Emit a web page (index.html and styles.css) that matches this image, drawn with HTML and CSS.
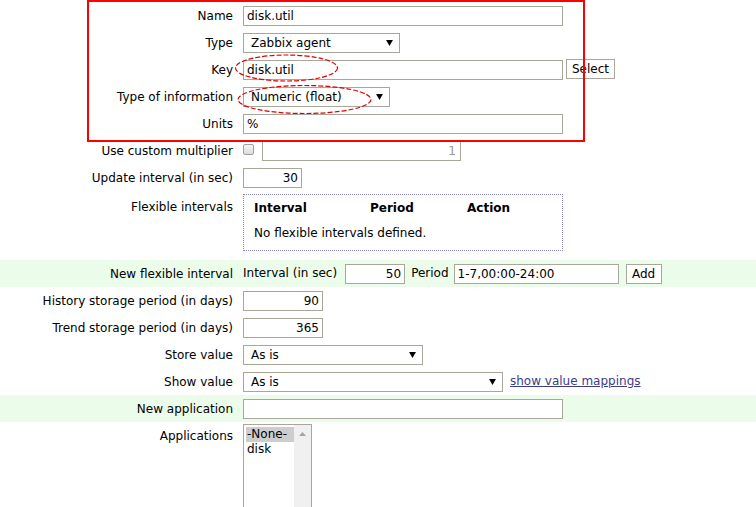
FILE: index.html
```html
<!DOCTYPE html>
<html>
<head>
<meta charset="utf-8">
<link rel="stylesheet" href="styles.css">
</head>
<body>
<div class="form">
  <div class="row">
    <div class="lbl">Name</div>
    <div class="fld"><input class="inp w320" type="text" value="disk.util"></div>
  </div>
  <div class="row">
    <div class="lbl">Type</div>
    <div class="fld"><div class="sel w157"><span>Zabbix agent</span><svg class="arr" width="8" height="7" viewBox="0 0 8 7"><path d="M0 0H8L4 7Z"/></svg></div></div>
  </div>
  <div class="row">
    <div class="lbl">Key</div>
    <div class="fld"><input class="inp w320" type="text" value="disk.util"><button class="btn btn-select">Select</button></div>
  </div>
  <div class="row">
    <div class="lbl">Type of information</div>
    <div class="fld"><div class="sel w147"><span>Numeric (float)</span><svg class="arr" width="8" height="7" viewBox="0 0 8 7"><path d="M0 0H8L4 7Z"/></svg></div></div>
  </div>
  <div class="row">
    <div class="lbl">Units</div>
    <div class="fld"><input class="inp w320" type="text" value="%"></div>
  </div>
  <div class="row">
    <div class="lbl">Use custom multiplier</div>
    <div class="fld"><span class="chk"></span><input class="inp w199 num dis" type="text" value="1"></div>
  </div>
  <div class="row">
    <div class="lbl">Update interval (in sec)</div>
    <div class="fld"><input class="inp w59 num" type="text" value="30"></div>
  </div>
  <div class="row row-flex">
    <div class="lbl lbl-top">Flexible intervals</div>
    <div class="fld">
      <div class="flexbox">
        <div class="fb-head"><span class="c1">Interval</span><span class="c2">Period</span><span class="c3">Action</span></div>
        <div class="fb-body">No flexible intervals defined.</div>
      </div>
    </div>
  </div>
  <div class="row green">
    <div class="lbl">New flexible interval</div>
    <div class="fld">
      <span>Interval (in sec)</span>
      <input class="inp w60 num ml8" type="text" value="50">
      <span class="ml6">Period</span>
      <input class="inp w165 ml5" type="text" value="1-7,00:00-24:00">
      <button class="btn btn-add">Add</button>
    </div>
  </div>
  <div class="row">
    <div class="lbl">History storage period (in days)</div>
    <div class="fld"><input class="inp w80 num" type="text" value="90"></div>
  </div>
  <div class="row">
    <div class="lbl">Trend storage period (in days)</div>
    <div class="fld"><input class="inp w80 num" type="text" value="365"></div>
  </div>
  <div class="row">
    <div class="lbl">Store value</div>
    <div class="fld"><div class="sel w180"><span>As is</span><svg class="arr" width="8" height="7" viewBox="0 0 8 7"><path d="M0 0H8L4 7Z"/></svg></div></div>
  </div>
  <div class="row">
    <div class="lbl">Show value</div>
    <div class="fld"><div class="sel w260"><span>As is</span><svg class="arr" width="8" height="7" viewBox="0 0 8 7"><path d="M0 0H8L4 7Z"/></svg></div><a class="link" href="#">show value mappings</a></div>
  </div>
  <div class="row green">
    <div class="lbl">New application</div>
    <div class="fld"><input class="inp w320" type="text" value=""></div>
  </div>
  <div class="row row-apps">
    <div class="lbl lbl-apps">Applications</div>
    <div class="fld">
      <div class="listbox">
        <div class="opts">
          <div class="opt selected">-None-</div>
          <div class="opt">disk</div>
        </div>
        <div class="scroll"><svg width="7" height="4" viewBox="0 0 7 4"><path d="M0 4L3.5 0L7 4Z"/></svg></div>
      </div>
    </div>
  </div>
</div>

<div class="annot-rect"></div>
<svg class="annot-ell" width="756" height="140" viewBox="0 0 756 140">
  <ellipse cx="286.5" cy="68" rx="51" ry="13" />
  <ellipse cx="304.5" cy="99.5" rx="66.5" ry="14" />
</svg>
</body>
</html>
```

FILE: styles.css
```css
html, body {
  margin: 0;
  padding: 0;
  background: #fff;
}
body {
  position: relative;
  width: 756px;
  height: 507px;
  overflow: hidden;
  font-family: "DejaVu Sans", Verdana, sans-serif;
  font-size: 12px;
  color: #000;
}
.form {
  padding-top: 2px;
}
.row {
  display: grid;
  grid-template-columns: 233px 1fr;
  column-gap: 10px;
  align-items: center;
  height: 27px;
  line-height: 15px;
}
.row.green {
  background: #ebfceb;
}
.lbl {
  text-align: right;
  white-space: nowrap;
  padding-top: 1px;
}
.fld {
  display: flex;
  align-items: center;
  white-space: nowrap;
}
.inp {
  box-sizing: border-box;
  height: 20px;
  border: 1px solid #a9a69a;
  background: #fff;
  font-family: inherit;
  font-size: 12px;
  color: #000;
  padding: 1px 3px 0 3px;
  margin: 0;
  outline: none;
}
.inp.num {
  text-align: right;
}
.inp.dis {
  color: #9a9a9a;
  padding-right: 4px;
}
.ml8 { margin-left: 8px; }
.ml6 { margin-left: 6px; }
.ml5 { margin-left: 5px; }
.w320 { width: 320px; }
.w199 { width: 199px; }
.w59 { width: 59px; }
.w60 { width: 60px; }
.w80 { width: 80px; }
.w165 { width: 165px; }
.w157 { width: 157px; }
.w147 { width: 147px; }
.w180 { width: 180px; }
.w260 { width: 260px; }

.sel {
  box-sizing: border-box;
  height: 20px;
  border: 1px solid #a9a69a;
  background: #fff;
  display: flex;
  align-items: center;
  justify-content: space-between;
  padding: 1px 6px 0 7px;
}
.arr {
  display: block;
  fill: #000;
  width: 7px;
  height: 6px;
  margin-top: -1px;
}
.btn {
  box-sizing: border-box;
  height: 20px;
  border: 1px solid #a9a69a;
  background: #fff;
  font-family: inherit;
  font-size: 12px;
  color: #000;
  padding: 0 4px;
  margin: 0;
}
.btn-select {
  margin-left: 3px;
  width: 49px;
  margin-top: -1px;
}
.btn-add {
  width: 36px;
  margin-left: 7px;
}
.chk {
  box-sizing: border-box;
  width: 11px;
  height: 11px;
  border: 1px solid #a0a0a0;
  border-radius: 2px;
  background: linear-gradient(#f4f4f4, #dcdcdc);
  margin-right: 8px;
  margin-top: -2px;
}
.link {
  margin-left: 7px;
  color: #3c3c8c;
  text-decoration: underline;
}

.row-flex {
  height: 69px;
  align-items: start;
}
.row-flex .fld {
  padding-top: 3px;
}
.lbl-top {
  padding-top: 9px;
}
.flexbox {
  box-sizing: border-box;
  width: 320px;
  height: 57px;
  border: 1px dotted #8a8ac4;
  padding: 6px 10px 0 10px;
}
.fb-head {
  display: flex;
  font-weight: bold;
}
.fb-head .c1 { width: 116px; }
.fb-head .c2 { width: 97px; }
.fb-body {
  margin-top: 10px;
}

.row-apps {
  height: 85px;
  align-items: start;
}
.lbl-apps {
  padding-top: 7px;
}
.row-apps .fld {
  padding-top: 2px;
  align-items: start;
}
.listbox {
  box-sizing: border-box;
  width: 69px;
  height: 83px;
  border: 1px solid #a9a69a;
  border-bottom: none;
  background: #fff;
  display: flex;
}
.opts {
  flex: 1;
  padding: 2px 0 0 2px;
}
.opt {
  height: 15px;
  line-height: 15px;
  padding-left: 1px;
}
.opt.selected {
  background: #cdcdcd;
}
.scroll {
  width: 17px;
  background: #f0f0f0;
  display: flex;
  justify-content: center;
  padding-top: 7px;
  box-sizing: border-box;
}
.scroll svg {
  display: block;
  fill: #a3a3a3;
}

.annot-rect {
  position: absolute;
  left: 87px;
  top: 0;
  width: 494px;
  height: 138px;
  border: 2px solid #ff0000;
  pointer-events: none;
}
.annot-ell {
  position: absolute;
  left: 0;
  top: 0;
  pointer-events: none;
}
.annot-ell ellipse {
  fill: none;
  stroke: #e00000;
  stroke-width: 1.2;
  stroke-dasharray: 5 2;
}
```
